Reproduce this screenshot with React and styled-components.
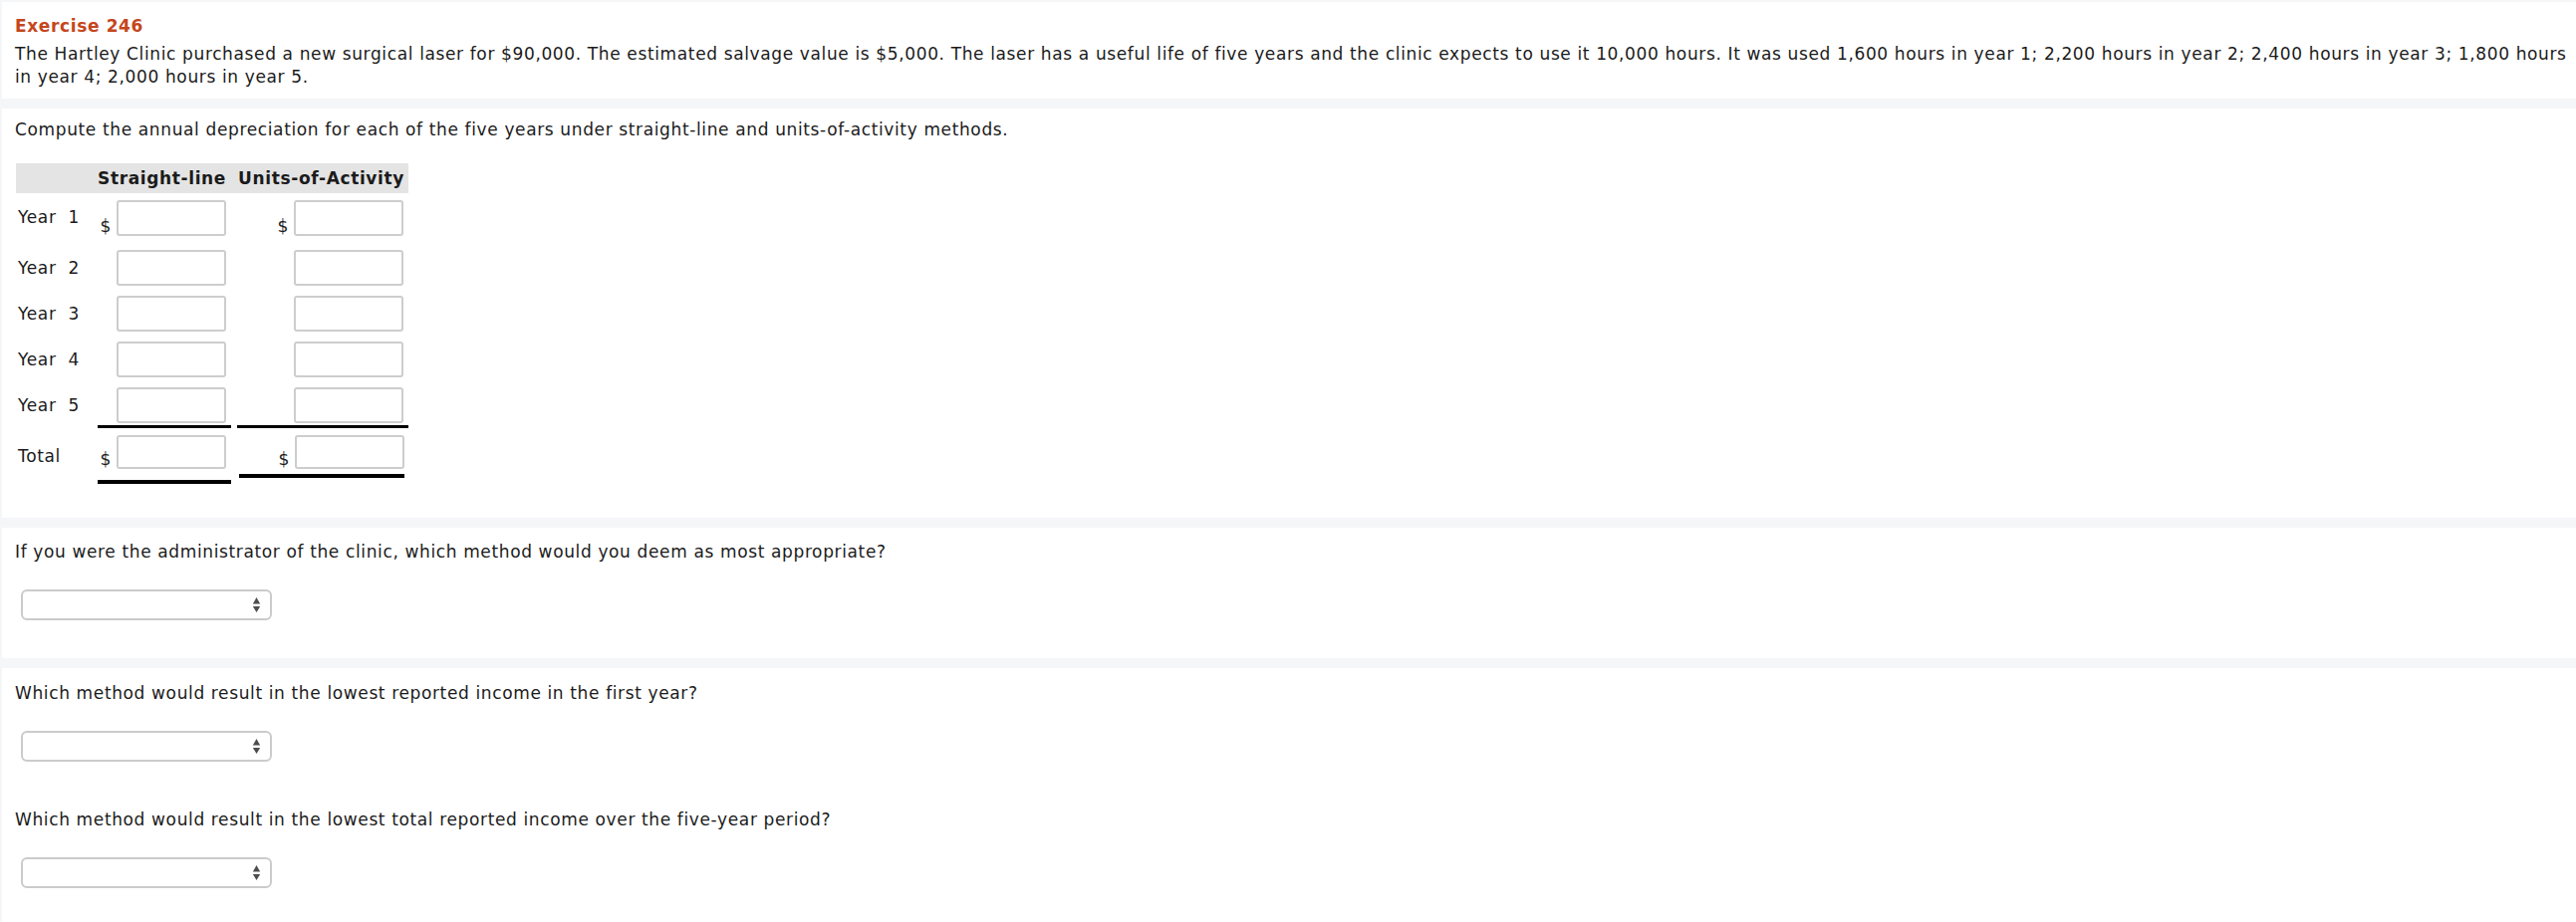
import React from "react";
import styled, { createGlobalStyle } from "styled-components";

const Global = createGlobalStyle`
  html, body { margin: 0; padding: 0; }
  body {
    background: #f5f6f8;
    font-family: "DejaVu Sans", Verdana, sans-serif;
    font-size: 17px;
    letter-spacing: 0.63px;
    line-height: 22px;
    color: #1b1b1b;
  }
`;

const Page = styled.div`
  min-height: 926px;
  box-sizing: border-box;
  padding: 2px 0 0 2px;
  display: flex;
  flex-direction: column;
  gap: 10px;
`;

const Panel = styled.section`
  background: #fff;
  padding: ${(p) => p.$pad || "13px 13px 13px 13px"};
  flex: ${(p) => (p.$grow ? "1" : "none")};
`;

const Title = styled.h2`
  margin: 0 0 6px;
  font-size: 17px;
  font-weight: bold;
  line-height: 22px;
  color: #c5461c;
`;

const Para = styled.p`
  margin: 0;
  line-height: 23px;
`;

const Question = styled.p`
  margin: ${(p) => p.$top || 0}px 0 27px;
`;

const Table = styled.div`
  margin: 22px 0 0 1px;
  width: 394px;
  display: flex;
  flex-direction: column;
`;

const Row = styled.div`
  display: grid;
  grid-template-columns: 76px 134px 178px;
  column-gap: 6px;
  align-items: stretch;
`;

const HeadRow = styled(Row)`
  background: #e4e4e4;
  height: 30px;
  align-items: center;
  font-weight: bold;
`;

const HeadCell = styled.div`
  text-align: right;
  padding-right: ${(p) => p.$pr}px;
  white-space: nowrap;
`;

const Label = styled.div`
  padding: 0 0 ${(p) => p.$lift || 0}px 2px;
  display: flex;
  align-items: center;
  white-space: pre;
`;

const Cell = styled.div`
  display: flex;
  justify-content: flex-end;
  align-items: flex-end;
  align-self: ${(p) => (p.$top ? "start" : "stretch")};
  padding: ${(p) => p.$pt}px ${(p) => p.$pr}px ${(p) => p.$pb}px 0;
  border-bottom: ${(p) => (p.$rule ? `${p.$rule}px solid #000` : "none")};
  margin: 0 ${(p) => p.$mr || 0}px 0 ${(p) => p.$ml || 0}px;
`;

const Dollar = styled.span`
  line-height: 17px;
  margin: 0 5px 1px 0;
`;

const Field = styled.div`
  width: 110px;
  height: ${(p) => p.$h || 36}px;
  box-sizing: border-box;
  border: 2px solid #cdcdcd;
  border-radius: 3px;
  background: #fff;
`;

const SelectBox = styled.div`
  margin-left: 6px;
  width: 252px;
  height: 31px;
  box-sizing: border-box;
  border: 2px solid #cbcbcb;
  border-radius: 6px;
  background: #fff;
  display: flex;
  align-items: center;
  justify-content: flex-end;
  padding-right: 9px;
`;

const Arrows = () => (
  <svg width="9" height="17" viewBox="0 0 9 17">
    <path d="M4.5 1 L8.2 7.5 L0.8 7.5 Z" fill="#4d4d4d" />
    <path d="M4.5 16 L8.2 10 L0.8 10 Z" fill="#4d4d4d" />
  </svg>
);

const Select = () => (
  <SelectBox>
    <Arrows />
  </SelectBox>
);

const years = [1, 2, 3, 4, 5];

export default function App() {
  return (
    <>
      <Global />
      <Page>
        <Panel $pad="13px 8px 10px 13px">
          <Title>Exercise 246</Title>
          <Para>
            The Hartley Clinic purchased a new surgical laser for $90,000. The estimated salvage value is $5,000. The laser has a useful life of five years and the clinic expects to use it 10,000 hours. It was used 1,600 hours in year 1; 2,200 hours in year 2; 2,400 hours in year 3; 1,800 hours in year 4; 2,000 hours in year 5.
          </Para>
        </Panel>

        <Panel $pad="10px 13px 34px 13px">
          <Para>
            Compute the annual depreciation for each of the five years under straight-line and units-of-activity methods.
          </Para>
          <Table>
            <HeadRow>
              <div />
              <HeadCell $pr={5}>Straight-line</HeadCell>
              <HeadCell $pr={10}>Units-of-Activity</HeadCell>
            </HeadRow>
            {years.map((y) => {
              const first = y === 1;
              const last = y === 5;
              const pt = first ? 7 : 5;
              const pb = first ? 9 : last ? 2 : 5;
              return (
                <Row key={y}>
                  <Label $lift={first ? 4 : 0}>{`Year  ${y}`}</Label>
                  <Cell $pt={pt} $pb={pb} $pr={5} $rule={last ? 3 : 0}>
                    {first && <Dollar>$</Dollar>}
                    <Field />
                  </Cell>
                  <Cell $pt={pt} $pb={pb} $pr={5} $mr={6} $rule={last ? 3 : 0}>
                    {first && <Dollar>$</Dollar>}
                    <Field />
                  </Cell>
                </Row>
              );
            })}
            <Row>
              <Label>Total</Label>
              <Cell $pt={7} $pb={11} $pr={5} $rule={4}>
                <Dollar>$</Dollar>
                <Field $h={34} />
              </Cell>
              <Cell $pt={7} $pb={5} $pr={0} $ml={2} $mr={10} $rule={4} $top>
                <Dollar>$</Dollar>
                <Field $h={34} />
              </Cell>
            </Row>
          </Table>
        </Panel>

        <Panel $pad="13px 13px 38px 13px">
          <Question>If you were the administrator of the clinic, which method would you deem as most appropriate?</Question>
          <Select />
        </Panel>

        <Panel $pad="14px 13px 20px 13px" $grow>
          <Question>Which method would result in the lowest reported income in the first year?</Question>
          <Select />
          <Question $top={47}>
            Which method would result in the lowest total reported income over the five-year period?
          </Question>
          <Select />
        </Panel>
      </Page>
    </>
  );
}
